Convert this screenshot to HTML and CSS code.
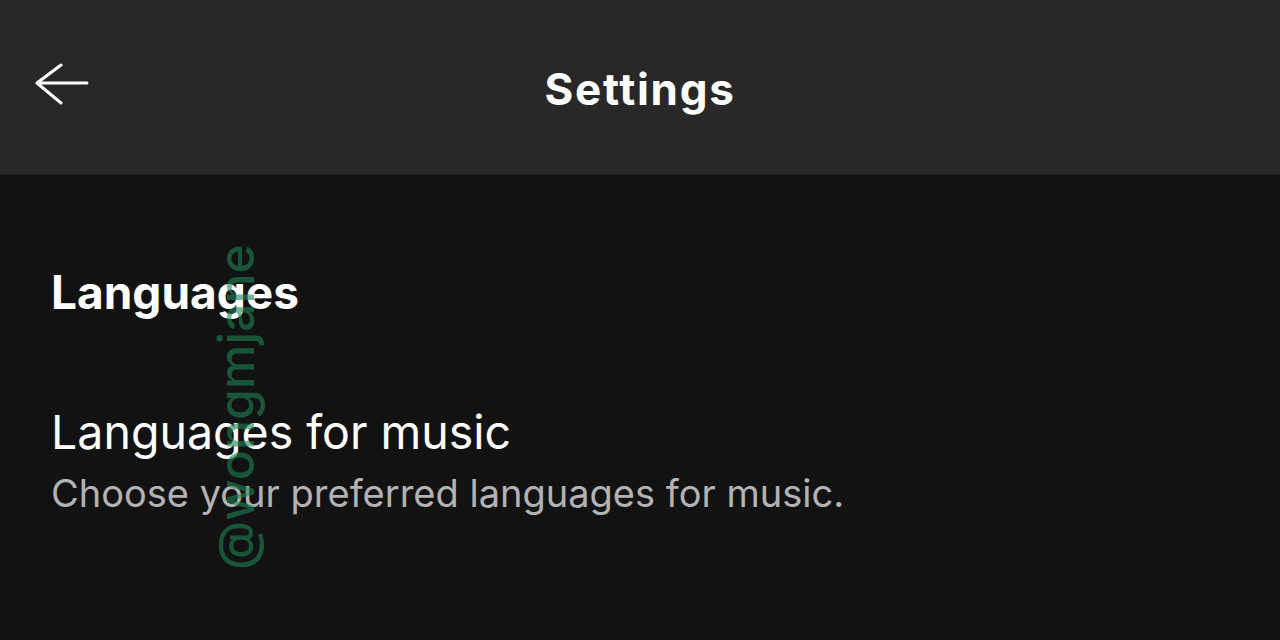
FILE: index.html
```html
<!DOCTYPE html>
<html>
<head>
<meta charset="utf-8">
<link rel="stylesheet" href="styles.css">
</head>
<body>
<div class="app">
  <header class="topbar">
    <button class="back" aria-label="Back">
      <svg width="56" height="44" viewBox="0 0 56 44"><path d="M53 20H3M27 2L3 20L27 40" fill="none" stroke="#fff" stroke-width="3" stroke-linecap="round" stroke-linejoin="round"/></svg>
    </button>
    <h1 class="title">Settings</h1>
  </header>
  <main class="content">
    <h2 class="section">Languages</h2>
    <div class="item">
      <div class="item-title">Languages for music</div>
      <div class="item-sub">Choose your preferred languages for music.</div>
    </div>
  </main>
  <div class="watermark">@wongmjane</div>
</div>
</body>
</html>
```
FILE: styles.css
```css
html, body { margin: 0; padding: 0; }
body {
  width: 1280px; height: 640px; overflow: hidden;
  background: #121212;
  font-family: Inter, Lato, sans-serif;
  color: #fff;
}
.app { position: relative; width: 1280px; height: 640px; }
.topbar {
  height: 174px;
  background: #282828;
  display: flex; align-items: center; justify-content: center;
  position: relative;
  border-bottom: 1px solid #1e1e1e;
}
.back {
  position: absolute; left: 34px; top: 63px;
  background: none; border: 0; padding: 0; margin: 0;
  display: flex;
}
.title {
  margin: 0; font-size: 44px; font-weight: 700; line-height: 1;
  letter-spacing: 1.7px; padding-top: 3px;
}
.content { padding: 94px 51px 0; }
.section { margin: 0; font-size: 46px; font-weight: 700; line-height: 1; }
.item { margin-top: 94px; }
.item-title { font-size: 46.5px; font-weight: 400; line-height: 1; }
.item-sub { font-size: 38px; color: #b3b3b3; margin-top: 18px; line-height: 1; }
.watermark {
  position: absolute; left: 236px; top: 407px;
  transform: translate(-50%, -50%) rotate(-90deg);
  font-size: 50px; font-weight: 500; color: rgba(30, 130, 85, 0.6);
  white-space: nowrap;
}
```
